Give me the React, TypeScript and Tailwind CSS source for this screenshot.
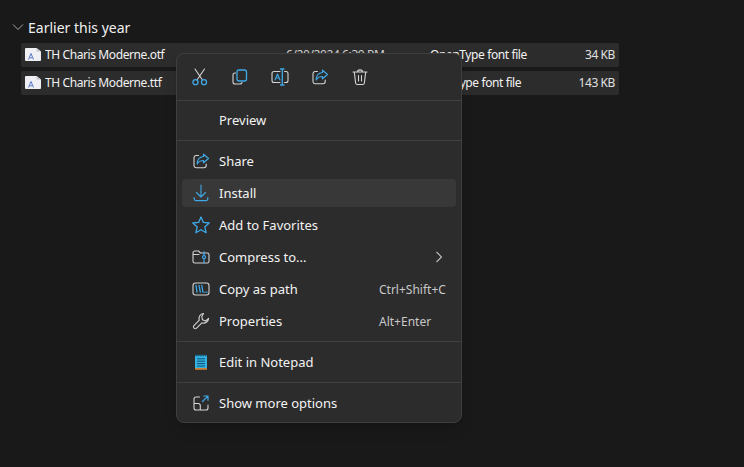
import React from "react";

const B = "#3fa9e8";
const G = "#d4d4d4";

function Ico({ children, size = 20 }: { children: React.ReactNode; size?: number }) {
  return (
    <svg width={size} height={size} viewBox="0 0 20 20" fill="none" strokeWidth={1.1} strokeLinecap="round" strokeLinejoin="round">
      {children}
    </svg>
  );
}

const Cut = () => (
  <Ico>
    <path d="M5 2 L12.5 13 M14.5 2 L7 13" stroke={G} />
    <circle cx="5.5" cy="15.2" r="2.5" stroke={B} strokeWidth={1.3} />
    <circle cx="14" cy="15.2" r="2.5" stroke={B} strokeWidth={1.3} />
  </Ico>
);
const Copy = () => (
  <Ico>
    <path d="M5.5 6 H4.8 A1.8 1.8 0 0 0 3 7.8 V15 A2 2 0 0 0 5 17 H10 A2 2 0 0 0 12 15.5" stroke={G} />
    <rect x="7" y="3" width="9.5" height="11" rx="2" stroke={B} strokeWidth={1.3} />
  </Ico>
);
const Rename = () => (
  <Ico>
    <path d="M10 4.5 H4 A2 2 0 0 0 2 6.5 V13.5 A2 2 0 0 0 4 15.5 H10" stroke={G} />
    <path d="M14.5 4.5 H16 A2 2 0 0 1 18 6.5 V13.5 A2 2 0 0 1 16 15.5 H14.5" stroke={G} />
    <path d="M10.5 2 H14 M10.5 18 H14 M12.3 2 V18" stroke={B} strokeWidth={1.3} />
    <path d="M5 13 L7.5 7 L10 13 M6 11 H9" stroke={B} />
  </Ico>
);
const Share = () => (
  <Ico>
    <path d="M7.5 4.5 H5 A2.2 2.2 0 0 0 3 6.7 V14.5 A2.2 2.2 0 0 0 5.2 16.7 H13 A2.2 2.2 0 0 0 15.2 14.5 V13" stroke={G} />
    <path d="M12.5 3.2 L17.5 7.5 L12.5 11.8 V9.5 C9.5 9.5 7.5 10.5 6.2 13 C6.2 9 8.5 6 12.5 5.5 Z" stroke={B} strokeWidth={1.2} />
  </Ico>
);
const Trash = () => (
  <Ico>
    <path d="M3 5 H17 M7.5 5 C7.5 2.2 12.5 2.2 12.5 5 M4.3 5 L5.6 16 A1.8 1.8 0 0 0 7.4 17.5 H12.6 A1.8 1.8 0 0 0 14.4 16 L15.7 5 M8.5 8.5 V14 M11.5 8.5 V14" stroke={G} />
  </Ico>
);
const Install = () => (
  <Ico>
    <path d="M10 2 V14 M5.5 9.5 L10 14 L14.5 9.5" stroke={B} />
    <path d="M3.2 14.5 V15.8 A1.8 1.8 0 0 0 5 17.6 H15 A1.8 1.8 0 0 0 16.8 15.8 V14.5" stroke={B} strokeWidth={1.2} />
  </Ico>
);
const Star = () => (
  <Ico>
    <path d="M10 2 L12.4 7.4 L18.2 8 L13.8 11.9 L15.1 17.7 L10 14.7 L4.9 17.7 L6.2 11.9 L1.8 8 L7.6 7.4 Z" stroke={B} strokeWidth={1.3} />
  </Ico>
);
const Zip = () => (
  <Ico>
    <path d="M2 5.8 A1.8 1.8 0 0 1 3.8 4 H7.5 L9.5 6 H16.2 A1.8 1.8 0 0 1 18 7.8 V14.2 A1.8 1.8 0 0 1 16.2 16 H3.8 A1.8 1.8 0 0 1 2 14.2 Z M2 7.5 H8" stroke={G} />
    <path d="M13 4.5 V8 M13 12.5 V16" stroke={B} strokeWidth={1.2} />
    <circle cx="13" cy="10.2" r="1.5" stroke={B} strokeWidth={1.2} />
  </Ico>
);
const Path = () => (
  <Ico>
    <rect x="2" y="4" width="16" height="12" rx="2.5" stroke={G} />
    <path d="M5 6.5 L6 13.2 M8 6.5 L9.3 13.2 M10.7 6.5 L12 13.2" stroke={B} strokeWidth={1.3} />
    <path d="M13.8 13.2 H14.1 M15.7 13.2 H16" stroke={B} strokeWidth={1.3} />
  </Ico>
);
const Wrench = () => (
  <Ico>
    <path d="M12.5 2.5 A5 5 0 0 0 8.3 9.2 L2.7 14.8 A1.9 1.9 0 0 0 5.3 17.4 L10.9 11.8 A5 5 0 0 0 17.6 7.4 L14.6 10 L11.5 8.8 L10.8 5.6 Z" stroke={G} />
  </Ico>
);
const Notepad = () => (
  <svg width="20" height="20" viewBox="0 0 20 20">
    <rect x="4" y="3.5" width="12" height="13" fill="#35b4e4" />
    <rect x="4" y="16" width="12" height="1.8" fill="#c77f3a" />
    <path d="M5 2.4 V4.5 M7.4 2.4 V4.5 M9.8 2.4 V4.5 M12.2 2.4 V4.5 M14.6 2.4 V4.5" stroke="#0f5f86" strokeWidth="1" />
    <path d="M6 6.8 H14 M6 9.2 H14 M6 11.6 H14 M6 14 H14" stroke="#0c4f73" strokeWidth="1" />
  </svg>
);
const More = () => (
  <Ico>
    <path d="M8.5 4 H5 A2 2 0 0 0 3 6 V15 A2 2 0 0 0 5 17 H15 A2 2 0 0 0 17 15 V12 M3 10.5 H7 A2 2 0 0 1 9.3 12.5 V17" stroke={G} />
    <path d="M11.5 8.5 L16.8 3.2 M12.8 3 H17 V7.2" stroke={B} strokeWidth={1.2} />
  </Ico>
);
const FontFile = () => (
  <svg width="16" height="16" viewBox="0 0 16 16">
    <path d="M0 2 Q0 1 1 1 H11.5 L16 4.5 V13 Q16 14 15 14 H1 Q0 14 0 13 Z" fill="#eff0f4" />
    <path d="M11.5 1 L16 4.5 H11.5 Z" fill="#c4c6cc" />
    <path d="M3.5 12.5 L6 6.5 L8.5 12.5 M4.5 10.8 H7.5" stroke="#5a78c8" strokeWidth="1" fill="none" />
  </svg>
);

function FileRow({ name, date, type, size }: { name: string; date: string; type: string; size: string }) {
  return (
    <div className="flex items-center h-6 ml-[21px] w-[598px] bg-[#2c2c2c] rounded-[2px] text-[12px] tracking-[-0.4px] text-[#f2f2f2]">
      <span className="w-6 pl-[4px] flex items-center"><FontFile /></span>
      <span className="w-[241px] truncate">{name}</span>
      <span className="w-[144px] text-[#cfcfcf]">{date}</span>
      <span className="flex-1">{type}</span>
      <span className="pr-1 text-[#e0e0e0]">{size}</span>
    </div>
  );
}

function Item({ icon, label, hint, chevron, active }: { icon?: React.ReactNode; label: string; hint?: string; chevron?: boolean; active?: boolean }) {
  return (
    <div className={`flex items-center h-7 mx-[5px] rounded-[4px] ${active ? "bg-[#383838]" : ""}`}>
      <span className="w-[37px] flex justify-center items-center pl-[1px] shrink-0">{icon}</span>
      <span className="flex-1 text-[#f3f3f3] pt-[2px]">{label}</span>
      {hint && <span className="text-[12px] text-[#c8c8c8] w-[77px] pt-[2px]">{hint}</span>}
      {chevron && (
        <svg width="10" height="12" viewBox="0 0 10 12" className="mr-[12px]" fill="none">
          <path d="M2.5 1 L7.5 6 L2.5 11" stroke="#bdbdbd" strokeWidth="1.1" />
        </svg>
      )}
    </div>
  );
}

const Sep = () => <div className="h-px bg-[#404040] my-[6px]" />;

export default function App() {
  return (
    <div className="relative w-[744px] h-[467px] overflow-hidden bg-[#191919] pt-[19px]" style={{ fontFamily: '"Noto Sans", sans-serif' }}>
      <div className="flex items-center h-4 text-[14px] text-[#f0f0f0] mb-[8px]">
        <svg width="12" height="12" viewBox="0 0 12 12" fill="none" className="ml-[12px] mr-[4px]">
          <path d="M1 3.5 L6 8.5 L11 3.5" stroke="#a8a8a8" strokeWidth="1" />
        </svg>
        Earlier this year
      </div>
      <div className="flex flex-col gap-1">
        <FileRow name="TH Charis Moderne.otf" date="6/20/2024 6:39 PM" type="OpenType font file" size="34 KB" />
        <FileRow name="TH Charis Moderne.ttf" date="6/20/2024 6:39 PM" type="TrueType font file" size="143 KB" />
      </div>

      <div className="absolute left-[176px] top-[53px] w-[286px] h-[370px] bg-[#2c2c2c] border border-[#3f3f3f] rounded-[8px] text-[13px] shadow-lg">
        <div className="flex items-center h-[46px] pl-[3px] border-b border-[#404040] box-content -mb-px">
          {[<Cut key="a" />, <Copy key="b" />, <Rename key="c" />, <Share key="d" />, <Trash key="e" />].map((i) => (
            <span key={i.key} className="w-10 flex justify-center">{i}</span>
          ))}
        </div>
        <div className="pt-[6px]">
          <Item label="Preview" />
          <Sep />
          <div className="flex flex-col gap-1">
            <Item icon={<Share />} label="Share" />
            <Item icon={<Install />} label="Install" active />
            <Item icon={<Star />} label="Add to Favorites" />
            <Item icon={<Zip />} label="Compress to..." chevron />
            <Item icon={<Path />} label="Copy as path" hint="Ctrl+Shift+C" />
            <Item icon={<Wrench />} label="Properties" hint="Alt+Enter" />
          </div>
          <Sep />
          <Item icon={<Notepad />} label="Edit in Notepad" />
          <Sep />
          <Item icon={<More />} label="Show more options" />
        </div>
      </div>
    </div>
  );
}
